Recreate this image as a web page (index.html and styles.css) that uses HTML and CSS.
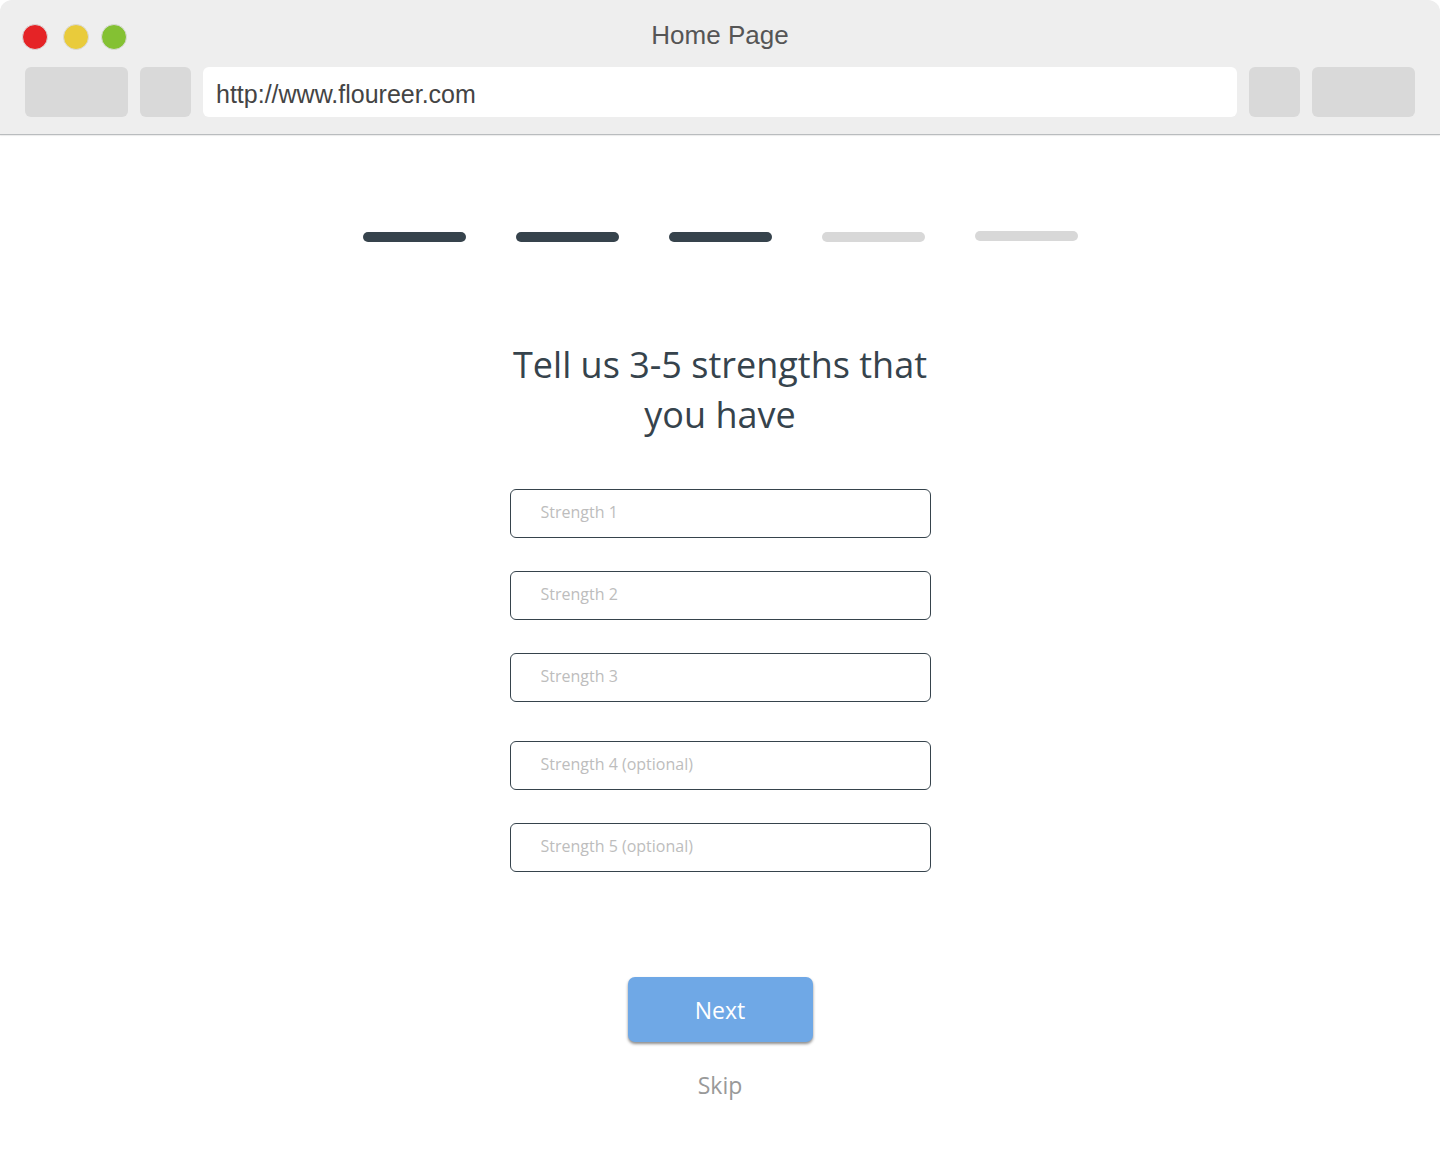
FILE: index.html
```html
<!DOCTYPE html>
<html>
<head>
<meta charset="utf-8">
<link rel="stylesheet" href="styles.css">
</head>
<body>
<div class="window">
  <header class="chrome">
    <div class="titlebar">
      <div class="lights">
        <span class="light red"></span>
        <span class="light yellow"></span>
        <span class="light green"></span>
      </div>
      <div class="wtitle">Home Page</div>
    </div>
    <div class="toolbar">
      <div class="tb wide"></div>
      <div class="tb narrow"></div>
      <div class="url">http://www.floureer.com</div>
      <div class="tb narrow"></div>
      <div class="tb wide"></div>
    </div>
  </header>
  <main class="content">
    <div class="progress">
      <span class="step done"></span>
      <span class="step done"></span>
      <span class="step done"></span>
      <span class="step"></span>
      <span class="step up"></span>
    </div>
    <h1 class="heading">Tell us 3-5 strengths that<br>you have</h1>
    <form class="fields">
      <input class="field" type="text" placeholder="Strength 1">
      <input class="field" type="text" placeholder="Strength 2">
      <input class="field" type="text" placeholder="Strength 3">
      <input class="field opt" type="text" placeholder="Strength 4 (optional)">
      <input class="field" type="text" placeholder="Strength 5 (optional)">
    </form>
    <button class="next" type="button">Next</button>
    <div class="skip">Skip</div>
  </main>
</div>
</body>
</html>
```
FILE: styles.css
```css
* { box-sizing: border-box; }
html, body { margin: 0; padding: 0; background: #ffffff; }
body { width: 1440px; height: 1159px; overflow: hidden; }
.window { width: 1440px; height: 1159px; display: flex; flex-direction: column; }
.chrome {
  height: 135px;
  background: #eeeeee;
  border-radius: 12px 12px 0 0;
  border-bottom: 1px solid #b9bcbe;
  box-shadow: 0 1px 1px rgba(0,0,0,0.08);
  display: flex;
  flex-direction: column;
}
.titlebar {
  height: 67px;
  display: flex;
  align-items: center;
  position: relative;
}
.lights {
  display: flex;
  gap: 13px;
  padding-left: 22px;
  margin-top: 6px;
}
.light {
  width: 26px; height: 26px; border-radius: 50%;
  border: 1px solid #dadada;
}
.red { background: #e52326; }
.yellow { background: #e9cb3b; }
.green { background: #84c133; }
.light.yellow { margin-left: 2px; }
.light.green { margin-left: -1px; }
.wtitle {
  position: absolute;
  left: 0; right: 0; top: 20px;
  text-align: center;
  font-family: "Liberation Sans", Arial, sans-serif;
  font-size: 26px;
  color: #555555;
}
.toolbar {
  display: flex;
  gap: 12px;
  padding: 0 25px;
  height: 50px;
}
.tb { background: #d9d9d9; border-radius: 6px; height: 50px; }
.tb.wide { width: 103px; }
.tb.narrow { width: 51px; }
.url {
  flex: 1;
  background: #ffffff;
  border-radius: 6px;
  height: 50px;
  font-family: "Liberation Sans", Arial, sans-serif;
  font-size: 25px;
  color: #444444;
  padding-left: 13px;
  line-height: 54px;
}
.content {
  flex: 1;
  display: flex;
  flex-direction: column;
  align-items: center;
  font-family: "Open Sans", sans-serif;
}
.progress {
  display: flex;
  gap: 50px;
  margin-top: 97px;
  height: 10px;
  align-items: flex-start;
}
.step {
  width: 103px; height: 10px; border-radius: 5px;
  background: #d8d8d8;
}
.step.done { background: #36434c; }
.step.up { margin-top: -1px; }
.heading {
  margin: 98px 0 0 0;
  font-size: 36px;
  font-weight: 400;
  line-height: 50px;
  color: #36434c;
  text-align: center;
}
.fields {
  display: flex;
  flex-direction: column;
  gap: 33px;
  margin-top: 49px;
}
.field {
  width: 421px; height: 49px;
  border: 1px solid #36434c;
  border-radius: 6px;
  padding: 0 0 3px 30px;
  font-family: "Open Sans", sans-serif;
  font-size: 16px;
  color: #36434c;
  background: #fff;
  outline: none;
}
.field::placeholder { color: #bdbdbd; }
.field.opt { margin-top: 6px; }
.next {
  margin-top: 105px;
  width: 185px; height: 65px;
  border: none;
  border-radius: 7px;
  background: #6fa8e6;
  color: #ffffff;
  font-family: "Open Sans", sans-serif;
  font-size: 23px;
  box-shadow: 0 2px 3px rgba(0,0,0,0.45);
  padding: 0;
}
.skip {
  margin-top: 27px;
  font-size: 23px;
  color: #999999;
}
```
